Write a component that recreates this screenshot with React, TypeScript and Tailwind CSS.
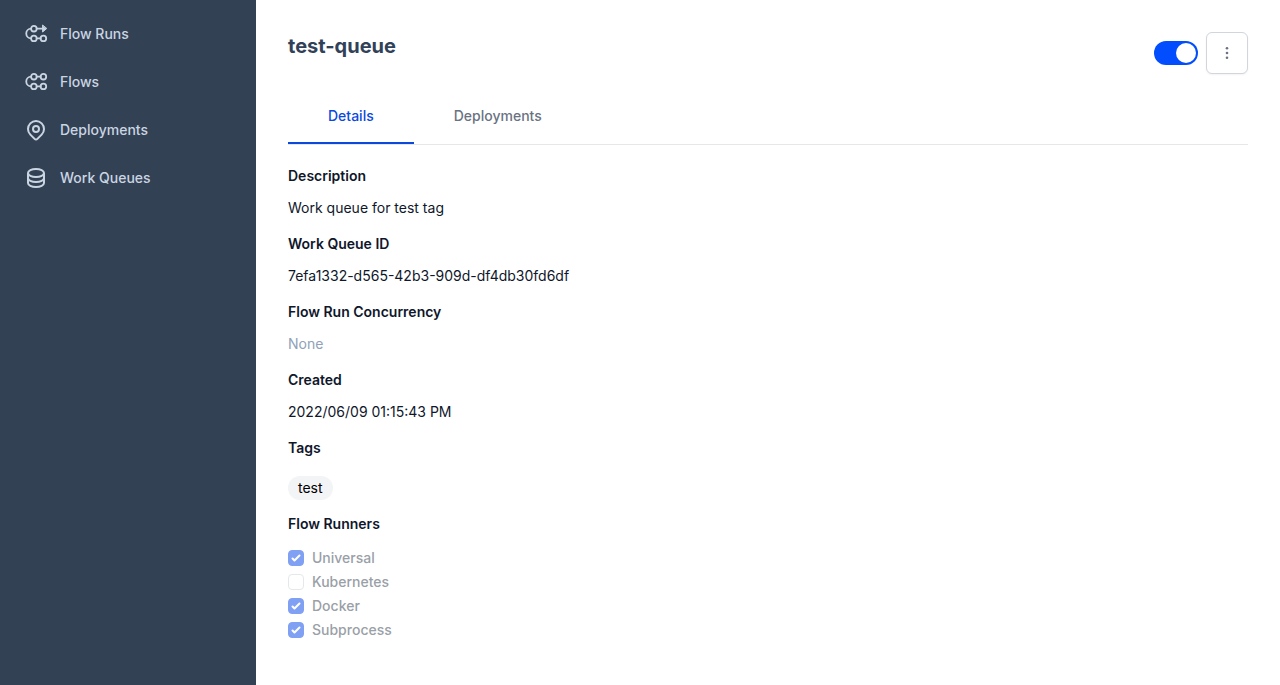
import { useState } from 'react'
import type { ReactNode } from 'react'

function Icon({ children, strokeWidth = 2 }: { children: ReactNode; strokeWidth?: number }) {
  return (
    <svg
      className="size-6 shrink-0"
      viewBox="0 0 24 24"
      fill="none"
      stroke="currentColor"
      strokeWidth={strokeWidth}
      strokeLinecap="round"
      strokeLinejoin="round"
      aria-hidden="true"
    >
      {children}
    </svg>
  )
}

const navItems = [
  {
    label: 'Flow Runs',
    icon: (
      <Icon strokeWidth={1.8}>
        <circle cx="9.9" cy="6.7" r="2.8" />
        <circle cx="9.9" cy="16.4" r="2.8" />
        <circle cx="19.4" cy="16.4" r="2.8" />
        <path d="M12.7 6.7H19M12.7 16.4h3.9M7.1 6.7a4.85 4.85 0 0 0 0 9.7" />
        <path d="M18.6 3.4v6.6l3.9-3.3z" fill="currentColor" strokeWidth="1" />
      </Icon>
    ),
  },
  {
    label: 'Flows',
    icon: (
      <Icon strokeWidth={1.8}>
        <circle cx="9.9" cy="6.7" r="2.8" />
        <circle cx="19.4" cy="6.7" r="2.8" />
        <circle cx="9.9" cy="16.4" r="2.8" />
        <circle cx="19.4" cy="16.4" r="2.8" />
        <path d="M12.7 6.7h3.9M12.7 16.4h3.9M7.1 6.7a4.85 4.85 0 0 0 0 9.7" />
      </Icon>
    ),
  },
  {
    label: 'Deployments',
    icon: (
      <Icon>
        <path d="M17.657 16.657L13.414 20.9a1.998 1.998 0 0 1-2.827 0l-4.244-4.243a8 8 0 1 1 11.314 0z" />
        <path d="M15 11a3 3 0 1 1-6 0 3 3 0 0 1 6 0z" />
      </Icon>
    ),
  },
  {
    label: 'Work Queues',
    icon: (
      <Icon>
        <path d="M4 7v10c0 2.21 3.582 4 8 4s8-1.79 8-4V7M4 7c0 2.21 3.582 4 8 4s8-1.79 8-4M4 7c0-2.21 3.582-4 8-4s8 1.79 8 4m0 5c0 2.21-3.582 4-8 4s-8-1.79-8-4" />
      </Icon>
    ),
  },
]

const fields = [
  { label: 'Description', value: 'Work queue for test tag' },
  { label: 'Work Queue ID', value: '7efa1332-d565-42b3-909d-df4db30fd6df' },
  { label: 'Flow Run Concurrency', value: null },
  { label: 'Created', value: '2022/06/09 01:15:43 PM' },
]

const runners = [
  { name: 'Universal', checked: true },
  { name: 'Kubernetes', checked: false },
  { name: 'Docker', checked: true },
  { name: 'Subprocess', checked: true },
]

function Sidebar() {
  return (
    <aside className="w-64 shrink-0 bg-[#334155] py-2.5">
      <nav>
        {navItems.map((item) => (
          <a
            key={item.label}
            href="#"
            className="flex h-12 items-center gap-3 px-6 text-sm font-medium text-slate-300"
          >
            {item.icon}
            {item.label}
          </a>
        ))}
      </nav>
    </aside>
  )
}

function Toggle() {
  const [on, setOn] = useState(true)
  return (
    <label className="flex cursor-pointer">
      <input
        type="checkbox"
        role="switch"
        aria-label="Work queue active"
        checked={on}
        onChange={() => setOn(!on)}
        className="peer sr-only"
      />
      <span className="flex h-6 w-11 rounded-full bg-gray-300 p-0.5 peer-checked:justify-end peer-checked:bg-[#024dfd]">
        <span className="size-5 rounded-full bg-white" />
      </span>
    </label>
  )
}

function Runner({ name, checked }: { name: string; checked: boolean }) {
  return (
    <label className="flex h-6 items-center gap-2 text-sm font-medium text-[#9a9fa8]">
      <span className="grid size-4">
        <input
          type="checkbox"
          defaultChecked={checked}
          disabled
          className="col-start-1 row-start-1 size-4 appearance-none rounded border border-gray-200 bg-white checked:border-[#80a0f4] checked:bg-[#80a0f4]"
        />
        {checked && (
          <svg className="col-start-1 row-start-1 size-4" viewBox="0 0 16 16" fill="white" aria-hidden="true">
            <path d="M12.207 4.793a1 1 0 0 1 0 1.414l-5 5a1 1 0 0 1-1.414 0l-2-2a1 1 0 0 1 1.414-1.414L6.5 9.086l4.293-4.293a1 1 0 0 1 1.414 0z" />
          </svg>
        )}
      </span>
      {name}
    </label>
  )
}

export default function App() {
  return (
    <div className="flex min-h-screen bg-white font-['Inter',sans-serif] text-sm text-slate-900">
      <Sidebar />
      <main className="min-w-0 flex-1 p-8">
        <header className="flex items-start justify-between">
          <h1 className="text-xl font-bold text-slate-700">test-queue</h1>
          <div className="flex items-center gap-2">
            <Toggle />
            <button
              type="button"
              aria-label="More actions"
              className="flex size-[42px] items-center justify-center rounded-md border border-gray-300 bg-white text-gray-500 shadow-xs"
            >
              <svg className="size-4" viewBox="0 0 16 16" fill="currentColor" aria-hidden="true">
                <circle cx="8" cy="3.3" r="1.3" />
                <circle cx="8" cy="8" r="1.3" />
                <circle cx="8" cy="12.7" r="1.3" />
              </svg>
            </button>
          </div>
        </header>

        <div role="tablist" className="mt-4 flex border-b border-gray-200 font-medium">
          <button
            type="button"
            role="tab"
            aria-selected="true"
            className="border-b-2 border-[#0b49dd] px-10 py-4 text-[#0b49dd]"
          >
            Details
          </button>
          <button
            type="button"
            role="tab"
            aria-selected="false"
            className="border-b-2 border-transparent px-10 py-4 text-gray-500"
          >
            Deployments
          </button>
        </div>

        <dl className="mt-[21px]">
          {fields.map((field) => (
            <div key={field.label} className="mb-4">
              <dt className="font-semibold">{field.label}</dt>
              <dd className={field.value ? 'mt-3' : 'mt-3 text-slate-400'}>{field.value ?? 'None'}</dd>
            </div>
          ))}
          <div className="mb-3.5">
            <dt className="font-semibold">Tags</dt>
            <dd className="mt-4.5 flex">
              <span className="rounded-full bg-gray-100 px-2.5 py-0.5 text-black">test</span>
            </dd>
          </div>
          <div>
            <dt className="font-semibold">Flow Runners</dt>
            <dd className="mt-3">
              {runners.map((runner) => (
                <Runner key={runner.name} {...runner} />
              ))}
            </dd>
          </div>
        </dl>
      </main>
    </div>
  )
}
